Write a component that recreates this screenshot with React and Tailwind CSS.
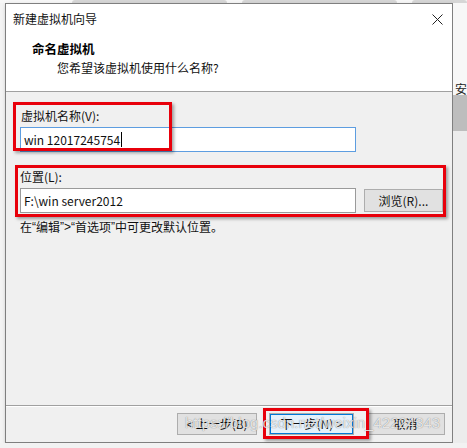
import React from "react";

const font = { fontFamily: '"Noto Sans CJK SC", "Noto Sans", sans-serif' };
const latin = { fontFamily: '"Liberation Sans", Arial, sans-serif' };

function Btn({ children, className = "" }) {
  return (
    <div
      className={`h-[22px] flex items-center justify-center border bg-[#e1e1e1] border-[#adadad] text-[12px] text-[#111] ${className}`}
    >
      {children}
    </div>
  );
}

export default function App() {
  return (
    <div
      className="relative w-[467px] h-[448px] overflow-hidden bg-[#f2f2f2] flex flex-col"
      style={font}
    >
      {/* top strip of background windows */}
      <div className="h-[3px] flex bg-[#f7f7f7]">
        <div className="ml-[72px] w-[155px] bg-[#d6d6d6] rounded-t-sm" />
        <div className="ml-[15px] w-[155px] bg-[#d6d6d6] rounded-t-sm" />
        <div className="ml-[15px] flex-1 bg-[#d6d6d6] rounded-t-sm" />
      </div>

      <div className="flex flex-1">
        <div className="w-[5px] bg-[#f4f4f4]" />
        {/* dialog */}
        <div className="w-[453px] h-[440px] border border-[#7f7f7f] bg-[#f0f0f0] flex flex-col shadow-[1px_2px_4px_rgba(0,0,0,0.25)]">
          {/* header */}
          <div className="h-[88px] bg-white border-b border-[#a0a0a0] flex flex-col">
            <div className="h-[30px] flex items-center justify-between pl-[7px] pr-[9px]">
              <span className="text-[12px] text-[#111] leading-none">新建虚拟机向导</span>
              <svg width="11" height="11" viewBox="0 0 11 11">
                <path d="M0.5 0.5 L10.5 10.5 M10.5 0.5 L0.5 10.5" stroke="#222" strokeWidth="1" fill="none" />
              </svg>
            </div>
            <div className="mt-[7px] pl-[26px] h-[16px] flex items-center text-[12.5px] font-bold text-black">
              命名虚拟机
            </div>
            <div className="mt-[3px] pl-[51px] h-[16px] flex items-center text-[12px] text-[#111]">
              您希望该虚拟机使用什么名称?
            </div>
          </div>

          {/* body */}
          <div className="flex-1 flex flex-col pt-[16px] pl-[14px]">
            <div className="h-[16px] flex items-center pl-[1px] text-[12px] text-[#111]">虚拟机名称(V):</div>
            <div className="mt-[3px] w-[336px] h-[25px] border border-[#5d9de0] bg-white flex items-center pl-[3px] text-[12px] text-[#111]">
              <span>win 12017245754</span>
              <span className="w-[1px] h-[15px] bg-black ml-[1px]" />
            </div>

            <div className="mt-[17px] h-[16px] flex items-center text-[12px] text-[#111]">位置(L):</div>
            <div className="mt-[3px] flex items-center gap-[8px]">
              <div className="w-[336px] h-[25px] border border-[#9a9a9a] bg-white flex items-center pl-[3px] text-[12px] text-[#111]">
                F:\win server2012
              </div>
              <Btn className="w-[79px] h-[23px]">浏览(R)...</Btn>
            </div>
            <div className="mt-[6px] h-[16px] flex items-center text-[12px] text-[#111] whitespace-pre">
              在<span style={latin}>“</span>编辑<span style={latin}>”&gt;“</span>首选项<span style={latin}>”</span>中可更改默认位置。
            </div>
          </div>

          {/* footer */}
          <div className="h-[37px] border-t border-[#a0a0a0] shadow-[inset_0_1px_0_#ffffff] flex justify-end items-start pt-[7px] pr-[7px] gap-[12px]">
            <Btn className="w-[80px]">&lt; 上一步(B)</Btn>
            <Btn className="w-[85px] border-[#0078d7] bg-[#e5f1fb] shadow-[inset_0_0_0_1px_#0078d7]">下一步(N) &gt;</Btn>
            <Btn className="w-[79px]">取消</Btn>
          </div>
        </div>

        {/* outside right */}
        <div className="flex-1 flex flex-col bg-[#e9e9e9]">
          <div className="h-[80px] bg-[#f7f7f7]" />
          <div className="h-[12px] text-[12px] leading-[12px] text-[#222] overflow-hidden pl-[2px] bg-[#f7f7f7]">安</div>
          <div className="h-[36px] bg-[#bdbdbd]" />
          <div className="flex-1 bg-[#ececec]" />
        </div>
      </div>
      <div className="h-[5px] bg-[#f2f2f2]" />

      {/* annotation boxes */}
      <div className="absolute left-[13px] top-[102px] w-[159px] h-[49px] border-[3px] border-[#e8000b] shadow-[2px_2px_3px_rgba(0,0,0,0.35)]" />
      <div className="absolute left-[15px] top-[165px] w-[431px] h-[52px] border-[3px] border-[#e8000b] shadow-[2px_2px_3px_rgba(0,0,0,0.35)]" />
      <div className="absolute left-[263px] top-[408px] w-[106px] h-[31px] border-[3px] border-[#e8000b] shadow-[2px_2px_3px_rgba(0,0,0,0.35)]" />

      {/* watermark */}
      <div
        className="absolute left-[185px] top-[413px] text-[15px] leading-[20px] text-white/80 whitespace-nowrap [text-shadow:0_0_1px_rgba(0,0,0,0.55)]"
        style={latin}
      >
        https://blog.csdn.net/weixin_42224343
      </div>
    </div>
  );
}
